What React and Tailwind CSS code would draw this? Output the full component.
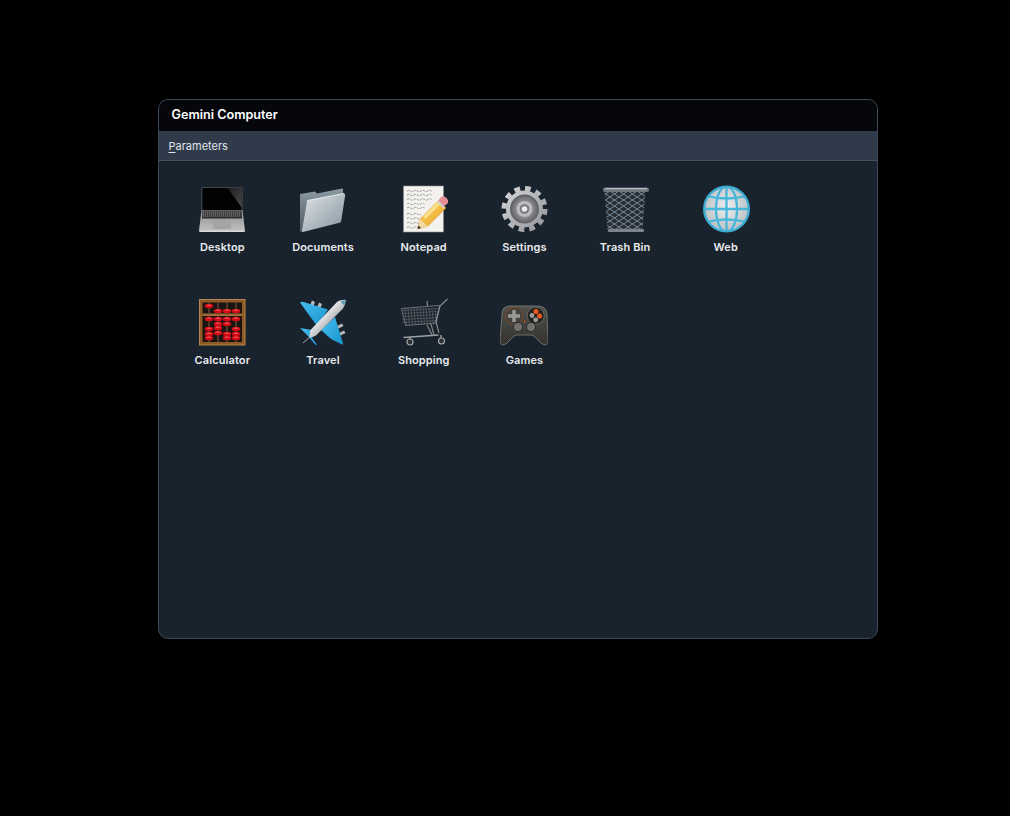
function Laptop() {
  return (
    <svg width="48" height="48" viewBox="0 0 48 48">
      <defs>
        <linearGradient id="lapBase" x1="0" y1="0" x2="0" y2="1"><stop offset="0" stopColor="#8f8f90" /><stop offset="1" stopColor="#c2c2c3" /></linearGradient>
        <linearGradient id="lapShine" x1="0" y1="0" x2="1" y2="1"><stop offset="0" stopColor="#1c1c1e" /><stop offset="1" stopColor="#4a4a4d" /></linearGradient>
      </defs>
      <rect x="3.500" y="2" width="41" height="24" rx="1.500" fill="#55575a" />
      <rect x="4.300" y="2.800" width="39.400" height="22.500" fill="#020203" />
      <path d="M29.500 2.800h14.200v20z" fill="url(#lapShine)" />
      <path d="M3.500 25h41l2.500 20.500q0 1.500-2 1.500H3q-2 0-2-1.500z" fill="url(#lapBase)" />
      <path d="M4.500 25.500h39l.5 8H4z" fill="#2c2c2e" />
      {[27, 29, 31].map((y) => (
        <line key={y} x1="5" x2="43" y1={y} y2={y} stroke="#97979a" strokeWidth="1" strokeDasharray="1.300 .7" />
      ))}
      <rect x="15" y="34.500" width="18" height="9.500" fill="#a4a4a5" />
      <path d="M1.500 46.200h45" stroke="#e4e4e5" strokeWidth="1" />
    </svg>
  );
}

function Folder() {
  return (
    <svg width="48" height="48" viewBox="0 0 48 48">
      <defs>
        <linearGradient id="fBack" x1="0" y1="0" x2="0" y2="1"><stop offset="0" stopColor="#8c9ba3" /><stop offset="1" stopColor="#4c5a62" /></linearGradient>
        <linearGradient id="fFront" x1="0" y1="0" x2="1" y2="1"><stop offset="0" stopColor="#dfe4e7" /><stop offset="1" stopColor="#84959e" /></linearGradient>
      </defs>
      <path d="M1 9l15-2.500 2 2 25-5q1 0 1 1V14L6 45l-4 2q-1 0-1-1z" fill="url(#fBack)" />
      <path d="M8 17q0-1.500 1.500-1.700L45 8.500q1.500 0 1.200 1.500l-4 26q-.2 1.500-1.700 1.800L4 47q-1.500 0-1-1.500z" fill="url(#fFront)" />
      <path d="M8 17q0-1.500 1.500-1.700L45 8.500" stroke="#f4f6f7" strokeWidth=".8" fill="none" />
    </svg>
  );
}

function Notepad() {
  const lines = [6, 10, 14.500, 19, 23, 29, 33.500, 38, 42.500];
  return (
    <svg width="48" height="48" viewBox="0 0 48 48">
      <defs>
        <linearGradient id="pen" x1="0" y1="0" x2="1" y2="1"><stop offset="0" stopColor="#fdd968" /><stop offset="1" stopColor="#e8a024" /></linearGradient>
      </defs>
      <rect x="3.500" y="1" width="40" height="46" fill="#f3f2ee" stroke="#8d8d8b" strokeWidth=".6" />
      {lines.map((y, i) => (
        <path key={y} d={`M7 ${y}q2-1.500 3.500 0t3.500 0 3.500 0 3.500 0 ${i < 3 ? "3.500 0 3.500 0 3.500 0" : i < 5 ? "3.500 0" : ""}`} fill="none" stroke="#55555a" strokeWidth=".6" strokeDasharray="2.500 1" />
      ))}
      <path d="M17.500 44l2.500-10 18.500-18.500 7.500 7.500L27.500 41.500z" fill="url(#pen)" stroke="#d08a1c" strokeWidth=".4" />
      <path d="M23 31.500l15-15 2.500 2.500-15 15z" fill="#fbe08a" />
      <path d="M17.500 44l2.500-10 7.500 7.500z" fill="#f2d8a9" />
      <path d="M17.500 44l.9-3.600 2.700 2.700z" fill="#333" />
      <path d="M38 16l2.500-3.500q3-2.500 6 .5t.5 6l-3.500 2.500z" fill="#e58e95" />
      <path d="M37 17l6.500 6.500 1.500-1.500-6.500-6.500z" fill="#cfcfcf" />
    </svg>
  );
}

function Gear() {
  return (
    <svg width="48" height="48" viewBox="0 0 48 48">
      <defs>
        <linearGradient id="gearM" x1="0" y1="0" x2="1" y2="1"><stop offset="0" stopColor="#d4d5d8" /><stop offset="1" stopColor="#94969a" /></linearGradient>
        <radialGradient id="gearR"><stop offset="0" stopColor="#4f5054" /><stop offset=".6" stopColor="#88898d" /><stop offset="1" stopColor="#5c5d61" /></radialGradient>
      </defs>
      <circle cx="24.500" cy="24" r="20.500" fill="none" stroke="url(#gearM)" strokeWidth="5" strokeDasharray="5.700 5.030" />
      <circle cx="24.500" cy="24" r="18.500" fill="url(#gearM)" />
      <circle cx="24.500" cy="24" r="14.500" fill="url(#gearR)" />
      <circle cx="24.500" cy="24" r="8" fill="#bcbdc0" />
      <circle cx="24.500" cy="24" r="4.800" fill="#77787c" />
      <circle cx="24.500" cy="24" r="2.800" fill="#ececed" />
    </svg>
  );
}

function Trash() {
  return (
    <svg width="48" height="48" viewBox="0 0 48 48">
      <defs>
        <pattern id="mesh" width="9" height="6" patternUnits="userSpaceOnUse">
          <path d="M0 0L4.500 3 9 0M0 6L4.500 3 9 6" fill="none" stroke="#7f93a6" strokeWidth=".9" />
        </pattern>
      </defs>
      <path d="M3.500 6l3 39q0 2 3 2h29q3 0 3-2l3-39z" fill="#272d33" />
      <path d="M3.500 6l3 39q0 2 3 2h29q3 0 3-2l3-39z" fill="url(#mesh)" />
      <rect x="2" y="2.500" width="46" height="4.500" rx="2" fill="#6f767c" />
      <rect x="4" y="3" width="42" height="1.300" fill="#b4babf" />
      <rect x="7" y="43.800" width="36" height="3.200" rx="1.500" fill="#7d848a" />
    </svg>
  );
}

function Globe() {
  return (
    <svg width="48" height="48" viewBox="0 0 48 48">
      <defs>
        <radialGradient id="gl" cx=".5" cy=".45"><stop offset="0" stopColor="#eeeeef" /><stop offset="1" stopColor="#bfc3c6" /></radialGradient>
        <clipPath id="glc"><circle cx="24.500" cy="24" r="22.500" /></clipPath>
      </defs>
      <circle cx="24.500" cy="24" r="22.500" fill="url(#gl)" />
      <g clipPath="url(#glc)" fill="none" stroke="#46b6da" strokeWidth="2.300">
        <ellipse cx="24.500" cy="24" rx="10.500" ry="23" />
        <path d="M24.500 1v46M1.500 24h46" />
        <path d="M4.500 11q20 5 40 0M4.500 37q20-5 40 0" />
      </g>
      <circle cx="24.500" cy="24" r="22.300" fill="none" stroke="#3fadd1" strokeWidth="2.400" />
    </svg>
  );
}

function Abacus() {
  const cols = [
    [11, [8, 21, 31, 36, 40]],
    [20, [13, 21, 26, 30, 35]],
    [29, [13, 21, 26, 36, 40]],
    [38, [13, 21, 31, 36, 40]],
  ];
  return (
    <svg width="48" height="48" viewBox="0 0 48 48">
      <rect x="1.500" y="1.500" width="45.500" height="45.500" fill="#8f5a24" />
      <rect x="1.500" y="1.500" width="45.500" height="45.500" fill="none" stroke="#b4854e" strokeWidth="1" />
      <rect x="4.500" y="4.500" width="39.500" height="39.500" fill="#1a1512" />
      <rect x="4.500" y="15.500" width="39.500" height="2.500" fill="#a26d33" />
      {cols.map(([x, ys]) => (
        <g key={x}>
          <line x1={x} x2={x} y1="4.500" y2="44" stroke="#7a5c3e" strokeWidth="1" />
          {ys.map((y) => (
            <g key={y}>
              <ellipse cx={x} cy={y} rx="4.300" ry="2.300" fill="#d00a14" />
              <ellipse cx={x} cy={y - 0.8} rx="2.600" ry=".7" fill="#ee5055" />
            </g>
          ))}
        </g>
      ))}
    </svg>
  );
}

function Plane() {
  return (
    <svg width="48" height="48" viewBox="0 0 48 48">
      <defs>
        <linearGradient id="fus" x1="0" y1="0" x2="1" y2="1"><stop offset=".3" stopColor="#ffffff" /><stop offset=".55" stopColor="#bfc1c3" /><stop offset="1" stopColor="#66696c" /></linearGradient>
        <linearGradient id="wing" x1="0" y1="0" x2="1" y2="1"><stop offset="0" stopColor="#45bdf0" /><stop offset="1" stopColor="#1a93cd" /></linearGradient>
      </defs>
      <path d="M13 2.500l3 1.500-2 5-3-1.500zM20 4.500l3 1.500-2 5-3-1.500zM43 25.500l1.500 2.500-5 2.500-1.500-2.500zM45 32.500l1.500 2.500-5 2.500-1.500-2.500z" fill="#b6b8ba" />
      <path d="M1 4.500q2-1 3.500-.5L29 11.500 18 28z" fill="url(#wing)" />
      <path d="M36 19L44 45.500q.3 1.500-1 1L32 41 22 32z" fill="url(#wing)" />
      <path d="M1 30l12 2 3 5-3 3 5 6.500q-1 .5-2 0L9 38z" fill="url(#wing)" />
      <path d="M47 2C46.500 5 45.500 8 44 10.500L17 37.500 10 40l1.500-8L38 4C40.500 2.500 44 1.500 47 2z" fill="url(#fus)" />
      <path d="M47 2c-2 .2-4 .8-5.500 1.800L44.600 7C45.700 5.500 46.600 3.800 47 2z" fill="#5d9cbb" />
      <path d="M11 39L4 45" stroke="#a9abad" strokeWidth="1" />
    </svg>
  );
}

function Cart() {
  const vs = [5, 8, 11, 14, 17, 20, 23, 26, 29, 32, 35];
  return (
    <svg width="48" height="48" viewBox="0 0 48 48" fill="none">
      <g stroke="#5b6065" strokeWidth=".7">
        {vs.map((x) => (
          <line key={x} x1={x} y1="10" x2={x + 1.500} y2="27" />
        ))}
        {[12.500, 15.500, 18.500, 21.500, 24.500].map((y) => (
          <line key={y} x1="2.500" y1={y} x2="37.500" y2={y - 2} />
        ))}
      </g>
      <path d="M1.500 10.500L39.500 7.500 35.500 25 5.500 27.500z" stroke="#767b80" strokeWidth=".9" />
      <path d="M47.500 1L40 8 36 24l3 11M27 3l.5 5" stroke="#8d9195" strokeWidth="1.100" />
      <path d="M3.500 39.500L38.500 37" stroke="#9fa2a5" strokeWidth="1.500" />
      <path d="M31 26l3 11M27 27l5 10" stroke="#83878a" strokeWidth="1.200" />
      <path d="M10 39v3M41 37v3" stroke="#a3a6a9" strokeWidth="1.300" />
      <circle cx="10" cy="44" r="3" fill="#2e3134" stroke="#a5a7a9" strokeWidth="1.200" />
      <circle cx="41.500" cy="43" r="3" fill="#2e3134" stroke="#a5a7a9" strokeWidth="1.200" />
    </svg>
  );
}

function Pad() {
  return (
    <svg width="48" height="48" viewBox="0 0 48 48">
      <defs>
        <linearGradient id="padB" x1="0" y1="0" x2="0" y2="1"><stop offset="0" stopColor="#50514d" /><stop offset="1" stopColor="#33322f" /></linearGradient>
      </defs>
      <path d="M10 8h28q8 0 9 8l1 26q0 5-3 5-3 0-8-6-3-4-6-4H17q-3 0-6 4-5 6-8 6-3 0-3-5L2 16q0-8 8-8z" fill="url(#padB)" stroke="#7f807a" strokeWidth=".8" />
      <circle cx="14" cy="18" r="8.500" fill="#42423f" stroke="#7e4a24" strokeWidth="1" />
      <path d="M12.300 12h3.400v4.300h4.300v3.400h-4.300V24h-3.400v-4.300H8v-3.400h4.300z" fill="#9a9b96" />
      <circle cx="35.700" cy="17.700" r="8.500" fill="#232321" stroke="#6f6f6b" strokeWidth=".8" />
      <circle cx="39.500" cy="18" r="2.500" fill="#ec5a20" />
      <circle cx="36" cy="13.500" r="2.500" fill="#ec5a20" />
      <circle cx="32" cy="17.500" r="2.400" fill="#9c9d99" />
      <circle cx="35.700" cy="21.800" r="2.400" fill="#9c9d99" />
      <circle cx="18" cy="29" r="4.600" fill="#70716c" stroke="#2b2b29" strokeWidth="1" />
      <circle cx="31" cy="29" r="4.600" fill="#70716c" stroke="#2b2b29" strokeWidth="1" />
      <circle cx="24.700" cy="23.700" r="1.100" fill="#b24a1c" />
    </svg>
  );
}

const apps = [
  ["Desktop", Laptop],
  ["Documents", Folder],
  ["Notepad", Notepad],
  ["Settings", Gear],
  ["Trash Bin", Trash],
  ["Web", Globe],
  ["Calculator", Abacus],
  ["Travel", Plane],
  ["Shopping", Cart],
  ["Games", Pad],
];

export default function App() {
  return (
    <div className="min-h-[816px] bg-black pt-[99px] pl-[158px] font-['Inter','Liberation_Sans',sans-serif]">
      <div className="flex h-[540px] w-[720px] flex-col overflow-hidden rounded-[10px] border border-[#3d4957] bg-[#19232d]">
        <div className="flex h-[31px] items-center bg-[#05070a] pl-[12.500px] text-[12.600px] leading-none font-semibold text-white">
          Gemini Computer
        </div>
        <div className="flex h-[30px] items-center border-b border-[#465261] bg-[#2f3b4b] pt-[1px] pl-[9.500px] text-[11px] leading-none text-[#e2e6ea]">
          <span><span className="underline underline-offset-2">P</span>arameters</span>
        </div>
        <div className="grid grid-cols-[repeat(6,100.700px)] auto-rows-[113px] pt-[24px] pl-[13px]">
          {apps.map(([name, Icon]) => (
            <div key={name} className="flex flex-col items-center">
              <Icon />
              <span className="mt-[7px] text-[11px] leading-[14px] font-semibold tracking-[0.01em] text-[#e8eaed]">{name}</span>
            </div>
          ))}
        </div>
      </div>
    </div>
  );
}
